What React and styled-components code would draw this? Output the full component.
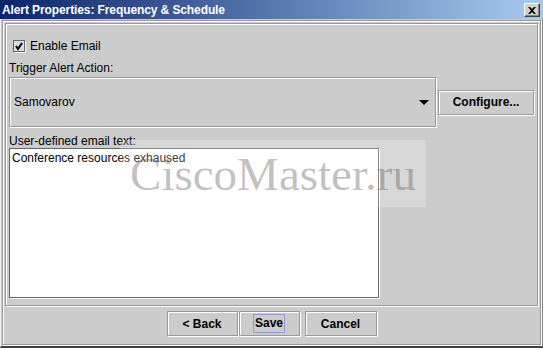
import React from "react";
import styled, { createGlobalStyle } from "styled-components";

const GlobalStyle = createGlobalStyle`
  html, body {
    margin: 0;
    padding: 0;
    background: #cccccc;
  }
  body {
    font-family: "Liberation Sans", Arial, sans-serif;
    font-size: 12px;
    color: #000;
  }
`;

// Window chrome
const Window = styled.div`
  position: relative;
  width: 543px;
  height: 348px;
  display: flex;
  flex-direction: column;
  background: #cccccc;
  overflow: hidden;
`;

const TitleBar = styled.div`
  height: 19px;
  display: flex;
  align-items: center;
  justify-content: space-between;
  padding: 0 3px 0 2px;
  background: linear-gradient(to right, #0a246a, #a6caf0);
  box-sizing: border-box;
`;

const TitleText = styled.span`
  color: #fff;
  font-family: "Liberation Sans", Arial, sans-serif;
  font-weight: bold;
  font-size: 12px;
  letter-spacing: -0.1px;
`;

const CloseButton = styled.div`
  width: 16px;
  height: 14px;
  margin-top: 1px;
  box-sizing: border-box;
  background: #d4d0c8;
  border: 1px solid;
  border-color: #fff #404040 #404040 #fff;
  box-shadow: inset -1px -1px 0 #808080;
  display: flex;
  align-items: center;
  justify-content: center;
`;

const Frame = styled.div`
  flex: 1;
  display: flex;
  flex-direction: column;
  border-left: 1px solid #eeeeee;
  border-right: 1px solid #808080;
  border-bottom: 2px solid #404040;
  padding: 1px;
`;

const Outer = styled.div`
  flex: 1;
  display: flex;
  flex-direction: column;
  border: 1px solid #999999;
  box-shadow: inset 1px 1px 0 #ffffff, 1px 1px 0 #ffffff;
  padding: 2px 2px 0 2px;
`;

const MainPanel = styled.div`
  height: 283px;
  box-sizing: border-box;
  display: flex;
  flex-direction: column;
  border: 1px solid #999999;
  box-shadow: inset 1px 1px 0 #ffffff, 1px 1px 0 #ffffff;
  padding: 0 1px 0 3px;
`;

// Form parts
const CheckRow = styled.label`
  display: flex;
  align-items: center;
  height: 18px;
  margin-top: 13px;
  padding-left: 4px;
  gap: 4px;
`;

const CheckBox = styled.span`
  width: 13px;
  height: 13px;
  display: inline-flex;
`;

const FieldLabel = styled.div`
  line-height: 14px;
  margin-top: ${(p) => p.$top}px;
`;

const ComboRow = styled.div`
  display: flex;
  align-items: center;
  margin-top: 2px;
  gap: 2px;
`;

const Combo = styled.div`
  width: 427px;
  height: 50px;
  box-sizing: border-box;
  display: flex;
  align-items: center;
  justify-content: space-between;
  padding: 0 6px 0 4px;
  border: 1px solid #999999;
  box-shadow: inset 1px 1px 0 #ffffff, 1px 1px 0 #ffffff;
`;

const Arrow = styled.span`
  width: 0;
  height: 0;
  border-left: 5px solid transparent;
  border-right: 5px solid transparent;
  border-top: 5px solid #000;
  margin-top: 1px;
`;

const Button = styled.button`
  width: ${(p) => p.$w}px;
  height: 25px;
  margin-left: ${(p) => p.$ml || 0}px;
  padding: 0;
  background: #cccccc;
  border: 1px solid #999999;
  box-shadow: inset 1px 1px 0 #ffffff, 1px 1px 0 #ffffff;
  font-family: "Liberation Sans", Arial, sans-serif;
  font-size: 12px;
  font-weight: bold;
  color: #000;
  cursor: default;
`;

const Focus = styled.span`
  display: inline-block;
  padding: 1px 1px 2px 1px;
  border: 1px solid #9999cc;
`;

const TextArea = styled.div`
  width: 370px;
  height: 150px;
  box-sizing: border-box;
  background: #fff;
  border: 1px solid #666666;
  box-shadow: 1px 1px 0 #ffffff;
  padding: 2px 2px;
  line-height: 14px;
`;

const ButtonBar = styled.div`
  flex: 1;
  display: flex;
  align-items: center;
  justify-content: center;
  padding-bottom: 3px;
`;

// Watermark over the dialog
const Watermark = styled.div`
  position: absolute;
  left: 120px;
  top: 140px;
  width: 306px;
  height: 67px;
  background: rgba(255, 255, 255, 0.22);
  display: flex;
  align-items: center;
  justify-content: center;
  font-family: "Liberation Serif", "Times New Roman", serif;
  font-size: 47px;
  color: rgba(90, 90, 90, 0.38);
  pointer-events: none;
`;

const App = () => {
  return (
    <>
      <GlobalStyle />
      <Window>
        <TitleBar>
          <TitleText>Alert Properties: Frequency &amp; Schedule</TitleText>
          <CloseButton>
            <svg width="8" height="7" viewBox="0 0 8 7">
              <path d="M0 0 L2 0 L4 2 L6 0 L8 0 L5 3.5 L8 7 L6 7 L4 5 L2 7 L0 7 L3 3.5 Z" fill="#000" />
            </svg>
          </CloseButton>
        </TitleBar>
        <Frame>
          <Outer>
            <MainPanel>
              <CheckRow>
                <CheckBox>
                  <svg width="13" height="13" viewBox="0 0 13 13">
                    <rect x="0.5" y="0.5" width="11" height="11" fill="#dcdcdc" stroke="#666" />
                    <path d="M1.5 12.5 H12.5 V1.5" fill="none" stroke="#fff" />
                    <path d="M3 6 L5 9 L9 3" fill="none" stroke="#000" strokeWidth="2" />
                  </svg>
                </CheckBox>
                Enable Email
              </CheckRow>
              <FieldLabel $top={6}>Trigger Alert Action:</FieldLabel>
              <ComboRow>
                <Combo>
                  <span>Samovarov</span>
                  <Arrow />
                </Combo>
                <Button $w={96}>Configure...</Button>
              </ComboRow>
              <FieldLabel $top={7}>User-defined email text:</FieldLabel>
              <TextArea>Conference resources exhaused</TextArea>
            </MainPanel>
            <ButtonBar>
              <Button $w={71}>&lt; Back</Button>
              <Button $w={61} $ml={1}>
                <Focus>Save</Focus>
              </Button>
              <Button $w={72} $ml={5}>Cancel</Button>
            </ButtonBar>
          </Outer>
        </Frame>
        <Watermark>CiscoMaster.ru</Watermark>
      </Window>
    </>
  );
};

export default App;
